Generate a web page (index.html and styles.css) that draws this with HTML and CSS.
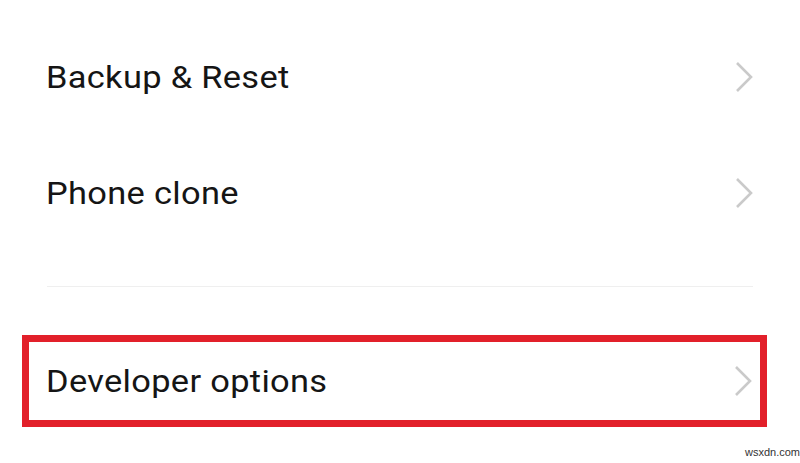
FILE: index.html
```html
<!doctype html>
<html><head>
<meta charset="UTF-8">
<meta name="viewport" content="width=device-width, initial-scale=1.0">
<title>Settings</title>
<link rel="stylesheet" href="styles.css">
</head>
<body>
<div id="settingsList">
  <div class="item">
    <span class="label">Backup &amp; Reset</span>
    <svg class="chev" width="18" height="32" viewBox="0 0 18 32"><polyline points="2,2 16,16 2,30"/></svg>
  </div>
  <div class="item">
    <span class="label">Phone clone</span>
    <svg class="chev" width="18" height="32" viewBox="0 0 18 32"><polyline points="2,2 16,16 2,30"/></svg>
  </div>
  <div class="divider"></div>
  <div class="item marked">
    <span class="label">Developer options</span>
    <svg class="chev" width="18" height="32" viewBox="0 0 18 32"><polyline points="2,2 16,16 2,30"/></svg>
  </div>
</div>
<div id="watermark">wsxdn.com</div>
</body>
</html>
```

FILE: styles.css
```css
body {
    margin: 0;
    background: #fff;
    font-family: Roboto, "Noto Sans", sans-serif;
    color: #151515;
    height: 463px;
    overflow: hidden;
    position: relative;
}
#settingsList {
    padding-top: 19px;
}
.item {
    height: 116px;
    display: flex;
    align-items: center;
    justify-content: space-between;
    padding: 0 47px 0 46px;
}
.label {
    display: inline-block;
    font-size: 32px;
    letter-spacing: 0.3px;
    transform: scaleX(1.075);
    transform-origin: left center;
}
.chev {
    fill: none;
    stroke: #cacaca;
    stroke-width: 2.6;
}
.divider {
    height: 1px;
    background: #efefef;
    margin: 35px 47px 0 47px;
}
.marked {
    height: 78px;
    margin: 48px 33px 0 22px;
    border: 7px solid #e2202a;
    padding: 0 8px 0 17px;
}
#watermark {
    position: absolute;
    left: 745px;
    top: 446px;
    font-family: "Liberation Sans", Arial, sans-serif;
    font-size: 11px;
    color: #333;
}
```
